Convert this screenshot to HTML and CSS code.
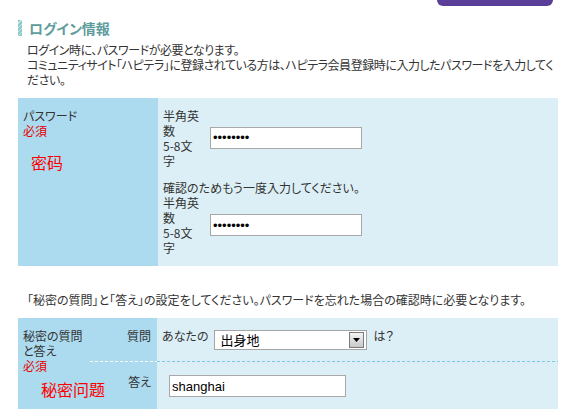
FILE: index.html
```html
<!DOCTYPE html>
<html lang="ja">
<head>
<meta charset="utf-8">
<title>ログイン情報</title>
<link rel="stylesheet" href="styles.css">
</head>
<body>
<div class="page">
  <div class="topbar"><div class="tab"></div></div>
  <h2 class="heading"><span class="heading-bar"></span>ログイン情報</h2>
  <p class="intro">ログイン時に、パスワードが必要となります。<br>コミュニティサイト「ハピテラ」に登録されている方は、ハピテラ会員登録時に入力したパスワードを入力してください。</p>

  <div class="pw-table">
    <div class="label-cell">
      <div>パスワード</div>
      <div class="required">必須</div>
      <div class="note note-pw">密码</div>
    </div>
    <div class="value-cell">
      <div class="field-row">
        <span class="hint">半角英数<br>5-8文字</span>
        <input class="text-input pw" type="password" value="12345678">
      </div>
      <div class="confirm-text">確認のためもう一度入力してください。</div>
      <div class="field-row">
        <span class="hint">半角英数<br>5-8文字</span>
        <input class="text-input pw" type="password" value="12345678">
      </div>
    </div>
  </div>

  <p class="qa-intro">「秘密の質問」と「答え」の設定をしてください。パスワードを忘れた場合の確認時に必要となります。</p>

  <div class="qa-table">
    <div class="qa-label">
      <div>秘密の質問と答え</div>
      <div class="required">必須</div>
      <div class="note note-qa">秘密问题</div>
    </div>
    <div class="qa-sub qa-first">質問</div>
    <div class="qa-value qa-first qa-question">
      <span>あなたの</span>
      <div class="select">
        <span class="select-text">出身地</span>
        <span class="select-btn">
          <svg width="7" height="4" viewBox="0 0 7 4"><path d="M0 0H7L3.5 4Z" fill="#000"/></svg>
        </span>
      </div>
      <span>は？</span>
    </div>
    <div class="qa-sub qa-sub-second">答え</div>
    <div class="qa-value qa-answer">
      <input class="text-input answer" type="text" value="shanghai">
    </div>
  </div>
</div>
</body>
</html>
```

FILE: styles.css
```css
* {
  box-sizing: border-box;
}

body {
  margin: 0;
  background: #fff;
  font-family: "Noto Sans CJK JP", "Noto Sans", sans-serif;
  font-size: 12px;
  line-height: 15px;
  color: #333;
  font-feature-settings: "palt";
}

.page {
  width: 566px;
  padding: 0 8px 0 18px;
}

.topbar {
  display: flex;
  justify-content: flex-end;
  height: 6px;
  padding-right: 5px;
}

.tab {
  width: 116px;
  height: 6px;
  background: #5a3e98;
  border-radius: 0 0 8px 8px;
}

.heading {
  margin: 14px 0 0;
  display: flex;
  align-items: center;
  gap: 7px;
  font-size: 14px;
  line-height: 16px;
  font-weight: bold;
  color: #5f9c9d;
}

.heading-bar {
  width: 4px;
  height: 16px;
  background: repeating-linear-gradient(135deg, #8ccaca 0 2px, #c8e8e8 2px 3px);
}

.intro {
  margin: 5.5px 0 0;
  padding-left: 9px;
  letter-spacing: -0.45px;
}

.pw-table {
  margin-top: 11.5px;
  display: grid;
  grid-template-columns: 140px 1fr;
}

.label-cell {
  background: #acdaee;
  padding: 9.5px 5px;
}

.value-cell {
  background: #ddeff6;
  padding: 9.5px 5px 11px;
}

.required {
  color: #e60000;
}

.note {
  position: relative;
  z-index: 1;
  color: #ff0000;
  font-family: "Noto Sans CJK SC", sans-serif;
  font-feature-settings: normal;
  font-size: 16px;
  line-height: 20px;
  white-space: nowrap;
}

.note-pw {
  margin: 14px 0 0 8px;
}

.note-qa {
  margin: 6.5px 0 0 18px;
}

.field-row {
  display: flex;
  align-items: center;
}

.hint {
  width: 39px;
}

.text-input {
  border: 1px solid #a8a8a8;
  background: #fff;
  color: #000;
  font-family: "Liberation Sans", Arial, sans-serif;
  font-size: 13px;
  padding: 0 2px;
  margin: 0;
  outline: none;
}

.pw {
  margin-left: 8px;
  width: 152px;
  height: 22px;
}

.confirm-text {
  margin-top: 12.5px;
}

.qa-intro {
  margin: 25.5px 0 0;
  padding-left: 9px;
}

.qa-table {
  margin-top: 11.5px;
  display: grid;
  grid-template-columns: 72px 67px 1fr;
  grid-template-rows: 44px 47px;
}

.qa-label {
  grid-row: 1 / 3;
  background: #acdaee;
  padding: 9.5px 4px 0 5px;
}

.qa-sub {
  background-color: #acdaee;
  text-align: right;
  padding: 9.5px 6px 0 0;
}

.qa-sub-second {
  padding-top: 11.5px;
}

.qa-value {
  background-color: #ddeff6;
}

.qa-sub.qa-first {
  background-image: repeating-linear-gradient(90deg, #ffffff 0 3px, transparent 3px 5px);
  background-size: 100% 1px;
  background-position: left bottom;
  background-repeat: no-repeat;
}

.qa-value.qa-first {
  background-image: repeating-linear-gradient(90deg, #7cc8e4 0 3px, transparent 3px 5px);
  background-size: 100% 1px;
  background-position: left bottom;
  background-repeat: no-repeat;
}

.qa-question {
  display: flex;
  align-items: flex-start;
  padding: 9.5px 0 0 5px;
}

.select {
  margin: 2.5px 6px 0 6px;
  width: 153px;
  height: 20px;
  border: 1px solid #a5a5a5;
  background: #fff;
  display: flex;
  align-items: center;
  padding: 0 2px 0 5px;
}

.select-text {
  flex: 1;
  color: #000;
  font-size: 13px;
  line-height: 16px;
}

.select-btn {
  width: 15px;
  height: 16px;
  border: 1px solid #7a7a7a;
  background: linear-gradient(#f4f4f4, #c8c8c8);
  display: flex;
  align-items: center;
  justify-content: center;
}

.qa-answer {
  padding: 13px 0 0 12px;
}

.answer {
  width: 177px;
  height: 22px;
}
```
